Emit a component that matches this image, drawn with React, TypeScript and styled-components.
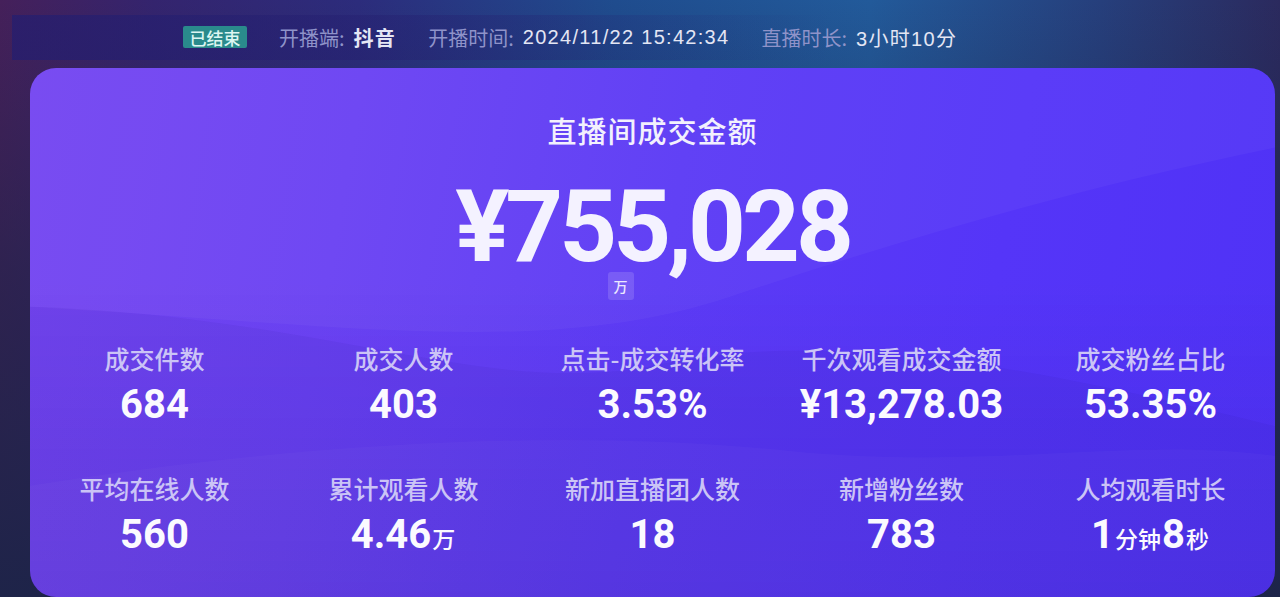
import React from "react";
import styled, { createGlobalStyle } from "styled-components";

const Global = createGlobalStyle`
  html, body { margin: 0; padding: 0; }
  body {
    width: 1280px;
    height: 597px;
    overflow: hidden;
    font-family: "Liberation Sans", "Noto Sans CJK SC", sans-serif;
  }
`;

const Page = styled.div`
  position: relative;
  width: 1280px;
  height: 597px;
  overflow: hidden;
  box-sizing: border-box;
  padding: 15px 5px 0 12px;
  display: flex;
  flex-direction: column;
  background:
    linear-gradient(180deg, rgba(28, 36, 72, 0) 0%, rgba(28, 36, 72, 0.55) 45%, rgba(28, 36, 72, 0.95) 100%),
    linear-gradient(90deg, #45205a 0%, #34246e 12%, #2c2c7c 28%, #1f4c8e 48%, #225a9a 68%, #263f7c 86%, #2b2a5e 100%);
`;

const Header = styled.div`
  height: 45px;
  display: flex;
  align-items: center;
  gap: 32px;
  padding-left: 171px;
  background: linear-gradient(90deg, rgba(36, 30, 112, 0.75) 0%, rgba(36, 30, 112, 0.35) 35%, rgba(36, 30, 112, 0) 65%);
`;

const StatusBadge = styled.span`
  display: inline-flex;
  align-items: center;
  justify-content: center;
  width: 64px;
  height: 22px;
  border-radius: 2px;
  background: #2a8a8c;
  color: #dcf6f2;
  font-family: "Noto Sans CJK SC", sans-serif;
  font-size: 17px;
  font-weight: 500;
`;

const MetaItem = styled.span`
  display: inline-flex;
  align-items: center;
  gap: 9px;
  font-size: 20px;
  white-space: nowrap;
`;

const MetaLabel = styled.span`
  color: #8f93c9;
  font-family: "Noto Sans CJK SC", sans-serif;
`;

const MetaValue = styled.span<{ $bold?: boolean }>`
  color: #e4e6f4;
  letter-spacing: 1.3px;
  font-weight: ${(p) => (p.$bold ? 700 : 400)};
`;

const Card = styled.div`
  position: relative;
  margin: 8px 0 0 18px;
  width: 1245px;
  height: 532px;
  border-radius: 26px;
  overflow: hidden;
  background:
    linear-gradient(180deg, rgba(0, 0, 0, 0) 40%, rgba(30, 10, 120, 0.12) 100%),
    linear-gradient(100deg, #7546f1 0%, #6a42f3 25%, #5c3bf5 50%, #5535f8 75%, #4f32f6 100%);
`;

const Waves = styled.svg`
  position: absolute;
  inset: 0;
  width: 100%;
  height: 100%;
  pointer-events: none;
`;

const Content = styled.div`
  position: relative;
  display: flex;
  flex-direction: column;
  align-items: center;
  padding-top: 45px;
`;

const Title = styled.div`
  font-family: "Noto Sans CJK SC", sans-serif;
  font-size: 29px;
  line-height: 34px;
  font-weight: 500;
  color: #f2f0fd;
  letter-spacing: 1px;
`;

const BigAmount = styled.div`
  margin-top: 38px;
  font-family: Roboto, "Liberation Sans", sans-serif;
  font-size: 101px;
  line-height: 84px;
  font-weight: 700;
  color: #f4f2ff;
  letter-spacing: -4px;
`;

const UnitTag = styled.span`
  margin-top: 3px;
  margin-right: 64px;
  width: 26px;
  height: 28px;
  display: flex;
  align-items: center;
  justify-content: center;
  border-radius: 3px;
  background: rgba(255, 255, 255, 0.14);
  color: #ece9ff;
  font-family: "Noto Sans CJK SC", sans-serif;
  font-size: 14px;
  font-weight: 500;
`;

const Grid = styled.div`
  align-self: stretch;
  margin-top: 42px;
  display: grid;
  grid-template-columns: repeat(5, 1fr);
  row-gap: 45px;
`;

const Stat = styled.div`
  display: flex;
  flex-direction: column;
  align-items: center;
  gap: 9px;
`;

const StatLabel = styled.div`
  font-family: "Noto Sans CJK SC", sans-serif;
  font-size: 25px;
  line-height: 32px;
  font-weight: 500;
  color: #cbc4f6;
  white-space: nowrap;
`;

const StatValue = styled.div`
  font-family: Roboto, "Liberation Sans", sans-serif;
  font-size: 40px;
  line-height: 44px;
  font-weight: 700;
  color: #fbfaff;
  white-space: nowrap;
`;

const Unit = styled.span`
  font-family: "Noto Sans CJK SC", sans-serif;
  font-size: 23px;
  font-weight: 500;
  margin: 0 1px;
`;

type Part = { text: string; unit?: boolean };
type StatItem = { label: string; value: Part[] };

const stats: StatItem[] = [
  { label: "成交件数", value: [{ text: "684" }] },
  { label: "成交人数", value: [{ text: "403" }] },
  { label: "点击-成交转化率", value: [{ text: "3.53%" }] },
  { label: "千次观看成交金额", value: [{ text: "¥13,278.03" }] },
  { label: "成交粉丝占比", value: [{ text: "53.35%" }] },
  { label: "平均在线人数", value: [{ text: "560" }] },
  { label: "累计观看人数", value: [{ text: "4.46" }, { text: "万", unit: true }] },
  { label: "新加直播团人数", value: [{ text: "18" }] },
  { label: "新增粉丝数", value: [{ text: "783" }] },
  {
    label: "人均观看时长",
    value: [
      { text: "1" },
      { text: "分钟", unit: true },
      { text: "8" },
      { text: "秒", unit: true },
    ],
  },
];

export default function App() {
  return (
    <>
      <Global />
      <Page>
        <Header>
          <StatusBadge>已结束</StatusBadge>
          <MetaItem>
            <MetaLabel>开播端:</MetaLabel>
            <MetaValue $bold>抖音</MetaValue>
          </MetaItem>
          <MetaItem>
            <MetaLabel>开播时间:</MetaLabel>
            <MetaValue>2024/11/22 15:42:34</MetaValue>
          </MetaItem>
          <MetaItem>
            <MetaLabel>直播时长:</MetaLabel>
            <MetaValue>3小时10分</MetaValue>
          </MetaItem>
        </Header>
        <Card>
          <Waves viewBox="0 0 1245 532" preserveAspectRatio="none">
            <path
              d="M0 0 H1245 V80 C1050 120 880 170 700 230 C520 290 330 260 0 240 Z"
              fill="rgba(255,255,255,0.035)"
            />
            <path
              d="M0 240 C300 250 450 330 620 300 C800 260 1000 300 1245 360 V532 H0 Z"
              fill="rgba(30,10,140,0.06)"
            />
            <path
              d="M0 420 C250 380 520 360 760 385 C960 405 1100 370 1245 390 V532 H0 Z"
              fill="rgba(255,255,255,0.025)"
            />
          </Waves>
          <Content>
            <Title>直播间成交金额</Title>
            <BigAmount>¥755,028</BigAmount>
            <UnitTag>万</UnitTag>
            <Grid>
              {stats.map((s) => (
                <Stat key={s.label}>
                  <StatLabel>{s.label}</StatLabel>
                  <StatValue>
                    {s.value.map((p, i) =>
                      p.unit ? <Unit key={i}>{p.text}</Unit> : <span key={i}>{p.text}</span>
                    )}
                  </StatValue>
                </Stat>
              ))}
            </Grid>
          </Content>
        </Card>
      </Page>
    </>
  );
}
